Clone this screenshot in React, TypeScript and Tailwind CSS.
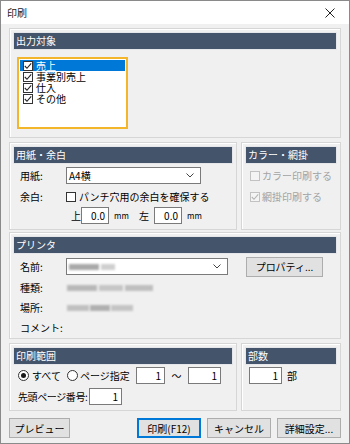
import React from 'react';

const FONT = "font-['Noto_Sans_CJK_JP','Noto_Sans_CJK_JP',sans-serif]";

function Check({ checked = false, disabled = false }: { checked?: boolean; disabled?: boolean }) {
  return (
    <span
      className={`w-[10px] h-[10px] shrink-0 border flex items-center justify-center ${
        disabled ? 'border-[#c2c2c2] bg-[#f4f4f4]' : 'border-[#333333] bg-white'
      }`}
    >
      {checked && (
        <svg width="8" height="8" viewBox="0 0 8 8">
          <path
            d="M0.8 4 L3 6.3 L7.2 1.4"
            fill="none"
            stroke={disabled ? '#b4b4b4' : '#222222'}
            strokeWidth="1.1"
          />
        </svg>
      )}
    </span>
  );
}

function Radio({ checked = false }: { checked?: boolean }) {
  return (
    <span className="w-[11px] h-[11px] shrink-0 rounded-full border border-[#333333] bg-white flex items-center justify-center">
      {checked && <span className="w-[5px] h-[5px] rounded-full bg-[#1a1a1a]" />}
    </span>
  );
}

function Num({ value, className }: { value: string; className: string }) {
  return (
    <div className={`h-[17px] border border-[#7a7a7a] bg-white text-right pr-[3px] leading-[15px] ${className}`}>
      {value}
    </div>
  );
}

function Select({ className, children }: { className: string; children?: React.ReactNode }) {
  return (
    <div className={`h-[17px] border border-[#7a7a7a] bg-white flex items-center pl-[2px] ${className}`}>
      <div className="flex-1 flex items-center">{children}</div>
      <svg width="8" height="5" viewBox="0 0 8 5" className="mr-[6px]">
        <path d="M0.5 0.5 L4 4 L7.5 0.5" fill="none" stroke="#444444" />
      </svg>
    </div>
  );
}

function Group({ title, className, children }: { title: string; className: string; children?: React.ReactNode }) {
  return (
    <div className={`border border-[#d6d6d6] shadow-[inset_1px_1px_0_#ffffff] p-[4px] ${className}`}>
      <div className="h-[16px] bg-[#44546a] text-white pl-[2px] leading-[16px] shadow-[0_0_0_1px_#e4e6ea]">
        {title}
      </div>
      {children}
    </div>
  );
}

function Blur({ className }: { className: string }) {
  return <div className={`h-[6px] blur-[1px] ${className}`} />;
}

function Btn({ label, primary = false, className }: { label: string; primary?: boolean; className: string }) {
  return (
    <div
      className={`h-[20px] bg-[#e1e1e1] border flex items-center justify-center ${
        primary ? 'border-[#0078d7] shadow-[inset_0_0_0_1px_#0078d7]' : 'border-[#adadad]'
      } ${className}`}
    >
      {label}
    </div>
  );
}

const items = [
  { label: '売上', selected: true },
  { label: '事業別売上' },
  { label: '仕入' },
  { label: 'その他' },
];

export default function App() {
  return (
    <div className={`w-[350px] h-[444px] border border-[#8a8a8a] flex flex-col bg-[#f0f0f0] text-[10px] text-black ${FONT}`}>
      {/* タイトルバー */}
      <div className="h-[23px] bg-white flex items-center justify-between pl-[6px] pr-[14px]">
        <span className="text-[10px] text-[#222222]">印刷</span>
        <svg width="10" height="10" viewBox="0 0 10 10">
          <path d="M0.5 0.5 L9.5 9.5 M9.5 0.5 L0.5 9.5" stroke="#222222" strokeWidth="1" />
        </svg>
      </div>

      <div className="flex-1 px-[8px] pt-[4px] flex flex-col">
        {/* 出力対象 */}
        <Group title="出力対象" className="h-[110px]">
          <div className="mt-[8px] ml-[3px] w-[111px] h-[72px] border-2 border-[#f3b52a] bg-white pt-[1px] px-[1px]">
            {items.map((it) => (
              <div
                key={it.label}
                className={`h-[11px] flex items-center gap-[3px] pl-[3px] leading-[11px] ${
                  it.selected ? 'bg-[#0078d7] text-white' : ''
                }`}
              >
                <Check checked />
                <span>{it.label}</span>
              </div>
            ))}
          </div>
        </Group>

        {/* 用紙・余白 / カラー・網掛 */}
        <div className="mt-[4px] h-[88px] flex gap-[4px]">
          <Group title="用紙・余白" className="w-[228px] h-full">
            <div className="mt-[4px] h-[17px] flex items-center pl-[6px]">
              <span className="w-[46px]">用紙:</span>
              <Select className="w-[135px]">A4横</Select>
            </div>
            <div className="mt-[4px] h-[17px] flex items-center pl-[6px]">
              <span className="w-[46px]">余白:</span>
              <Check />
              <span className="ml-[3px]">パンチ穴用の余白を確保する</span>
            </div>
            <div className="mt-[2px] h-[17px] flex items-center pl-[57px]">
              <span className="w-[10px]">上</span>
              <Num value="0.0" className="w-[28px]" />
              <span className="ml-[5px] w-[25px] text-[8px]">mm</span>
              <span className="w-[15px]">左</span>
              <Num value="0.0" className="w-[28px]" />
              <span className="ml-[5px] text-[8px]">mm</span>
            </div>
          </Group>

          <Group title="カラー・網掛" className="flex-1 h-full">
            <div className="mt-[4px] h-[17px] flex items-center pl-[4px] gap-[2px] text-[#a3a3a3]">
              <Check disabled />
              <span>カラー印刷する</span>
            </div>
            <div className="mt-[4px] h-[17px] flex items-center pl-[4px] gap-[2px] text-[#a3a3a3]">
              <Check checked disabled />
              <span>網掛印刷する</span>
            </div>
          </Group>
        </div>

        {/* プリンタ */}
        <Group title="プリンタ" className="mt-[2px] h-[107px]">
          <div className="mt-[5px] h-[17px] flex items-center pl-[6px]">
            <span className="w-[46px]">名前:</span>
            <Select className="w-[162px]">
              <Blur className="w-[30px] bg-[#a9a9a9]" />
              <Blur className="w-[14px] bg-[#cfcfcf] ml-[2px]" />
            </Select>
            <Btn label="プロパティ..." className="ml-[18px] w-[77px] h-[17px]" />
          </div>
          <div className="mt-[4px] h-[17px] flex items-center pl-[6px]">
            <span className="w-[47px]">種類:</span>
            <Blur className="w-[30px] bg-[#b8b8b8]" />
            <Blur className="w-[24px] bg-[#c6c6c6] ml-[2px]" />
            <Blur className="w-[28px] bg-[#bfbfbf] ml-[2px]" />
          </div>
          <div className="mt-[3px] h-[17px] flex items-center pl-[6px]">
            <span className="w-[47px]">場所:</span>
            <Blur className="w-[22px] bg-[#c0c0c0]" />
            <Blur className="w-[20px] bg-[#b0b0b0] ml-[1px]" />
            <Blur className="w-[22px] bg-[#c4c4c4] ml-[1px]" />
          </div>
          <div className="mt-[3px] h-[17px] flex items-center pl-[6px]">
            <span>コメント:</span>
          </div>
        </Group>

        {/* 印刷範囲 / 部数 */}
        <div className="mt-[4px] h-[68px] flex gap-[4px]">
          <Group title="印刷範囲" className="w-[228px] h-full">
            <div className="mt-[3px] h-[17px] flex items-center pl-[4px]">
              <Radio checked />
              <span className="ml-[3px] w-[35px]">すべて</span>
              <Radio />
              <span className="ml-[2px] w-[56px] whitespace-nowrap">ページ指定</span>
              <Num value="1" className="w-[29px]" />
              <span className="w-[23px] text-center">〜</span>
              <Num value="1" className="w-[33px]" />
            </div>
            <div className="mt-[4px] h-[17px] flex items-center pl-[4px]">
              <span className="w-[71px] whitespace-nowrap tracking-[-0.4px]">先頭ページ番号:</span>
              <Num value="1" className="w-[33px]" />
            </div>
          </Group>

          <Group title="部数" className="flex-1 h-full">
            <div className="mt-[3px] h-[17px] flex items-center pl-[3px]">
              <Num value="1" className="w-[33px]" />
              <span className="ml-[5px]">部</span>
            </div>
          </Group>
        </div>

        {/* ボタン */}
        <div className="mt-[7px] flex items-center">
          <Btn label="プレビュー" className="w-[61px]" />
          <div className="ml-auto flex gap-[6px]">
            <Btn label="印刷(F12)" primary className="w-[64px]" />
            <Btn label="キャンセル" className="w-[64px]" />
            <Btn label="詳細設定..." className="w-[64px]" />
          </div>
        </div>
      </div>
    </div>
  );
}
